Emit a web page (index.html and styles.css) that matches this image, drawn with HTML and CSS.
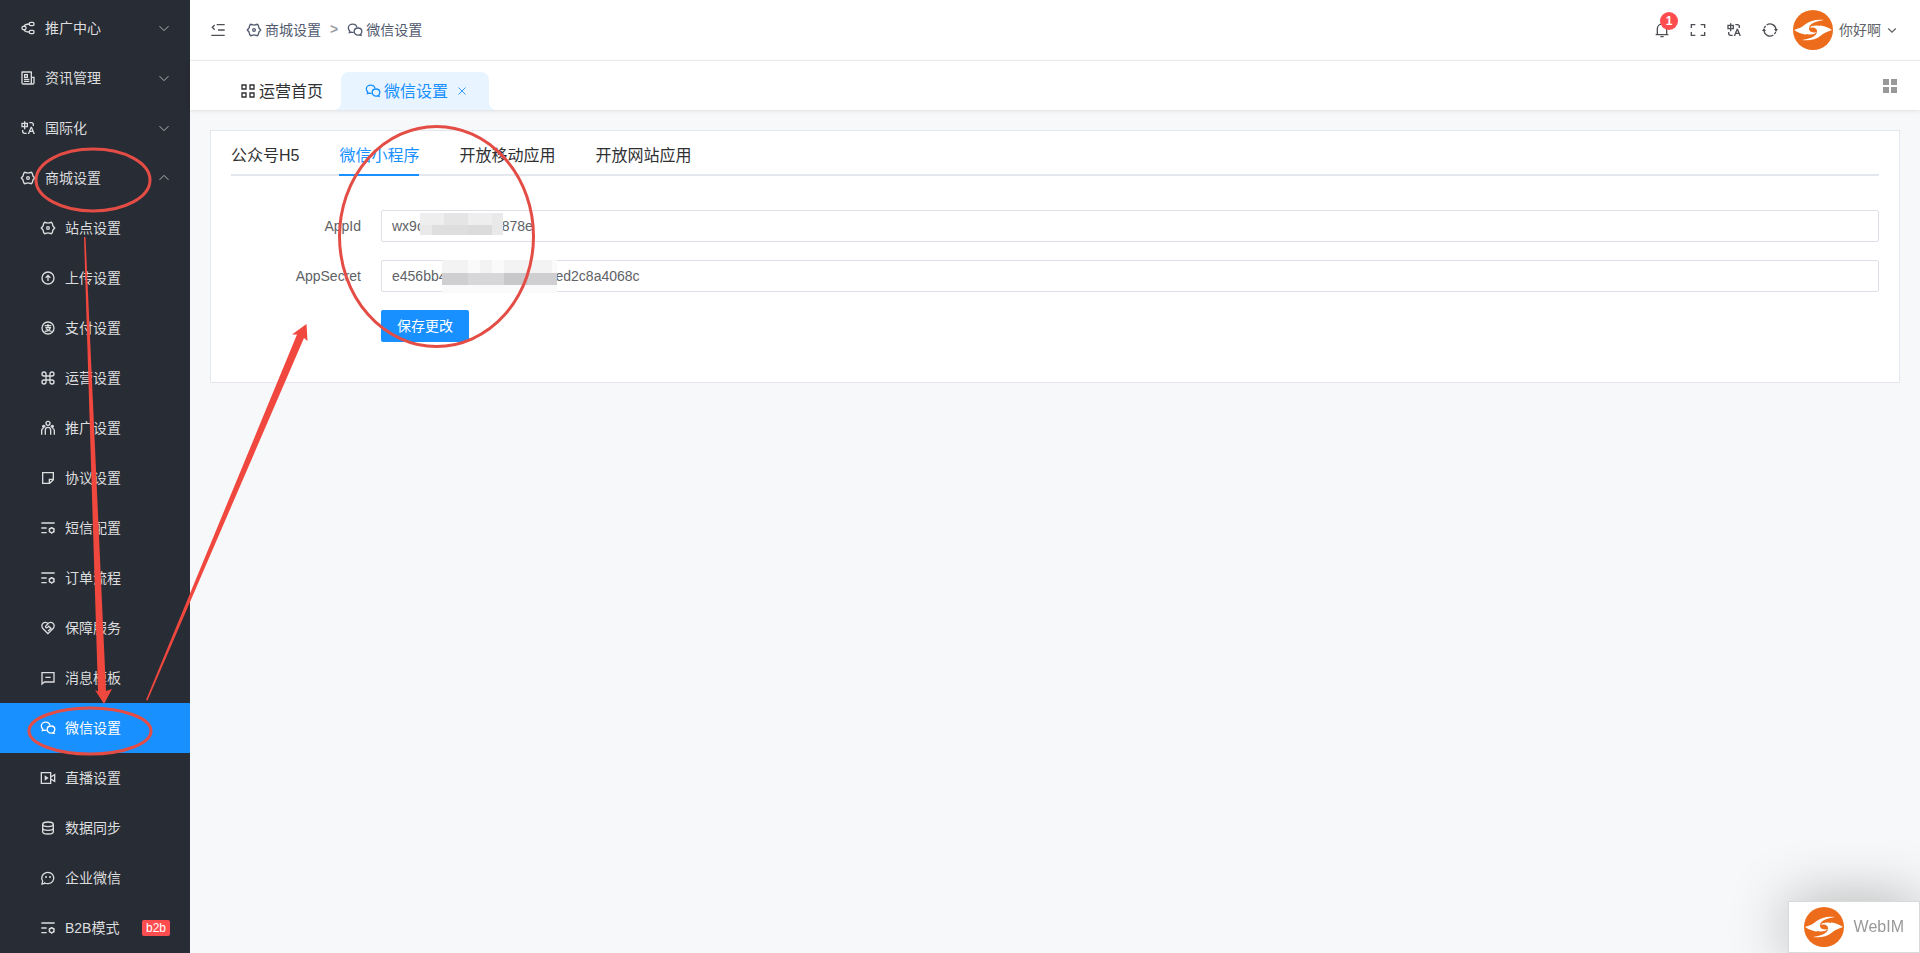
FILE: index.html
```html
<!DOCTYPE html>
<html lang="zh-CN">
<head>
    <meta charset="UTF-8">
    <meta name="viewport" content="width=device-width, initial-scale=1.0">
    <title>微信设置</title>
    <link rel="stylesheet" href="styles.css">
</head>
<body>
    <!-- icons -->
    <svg class="sprite" aria-hidden="true">
        <symbol id="i-share" viewBox="0 0 24 24"><g class="line"><rect x="3" y="9.500" width="6" height="5" rx="2"/><rect x="14" y="3.500" width="7" height="5" rx="2"/><rect x="14" y="15.500" width="7" height="5" rx="2"/><path d="M6 9.500C7 7 9 6 14 6M6 14.500c1 2.500 3 3.500 8 3.500"/></g></symbol>
        <symbol id="i-news" viewBox="0 0 24 24"><path d="M16 20V4H4v15a1 1 0 001 1h11zm3 2H5a3 3 0 01-3-3V3a1 1 0 011-1h14a1 1 0 011 1v7h4v9a3 3 0 01-3 3zm-1-10v7a1 1 0 002 0v-7h-2zM6 6h6v6H6V6zm2 2v2h2V8H8zm-2 5h8v2H6v-2zm0 3h8v2H6v-2z"/></symbol>
        <symbol id="i-lang" viewBox="0 0 24 24"><path d="M5 15v2a2 2 0 001.850 1.995L7 19h3v2H7a4 4 0 01-4-4v-2h2zm13-5l4.400 11h-2.155l-1.201-3h-4.090l-1.199 3h-2.154L16 10h2zm-1 2.885L15.753 16h2.492L17 12.885zM8 2v2h4v7H8v3H6v-3H2V4h4V2h2zm9 1a4 4 0 014 4v2h-2V7a2 2 0 00-2-2h-3V3h3zM6 6H4v3h2V6zm4 0H8v3h2V6z"/></symbol>
        <symbol id="i-gear" viewBox="0 0 24 24"><g class="line"><path d="M2 12l2.500-3c.8-1 .3-2.500 1-3.800L7 3.500l2.500.6c1.600.6 3.400.6 5 0l2.500-.6 1.500 1.700c.7 1.300.2 2.800 1 3.800l2.500 3-2.500 3c-.8 1-.3 2.500-1 3.800L17 20.500l-2.500-.6c-1.600-.6-3.400-.6-5 0l-2.500.6-1.500-1.700c-.7-1.300-.2-2.800-1-3.800z"/><circle cx="12" cy="12" r="2"/></g></symbol>
        <symbol id="i-upload" viewBox="0 0 24 24"><g class="line"><circle cx="12" cy="12" r="9"/><path d="M12 16.500V9M8.500 11.500L12 8l3.500 3.500"/></g></symbol>
        <symbol id="i-pay" viewBox="0 0 24 24"><g class="line"><circle cx="12" cy="12" r="9"/><path d="M7 8.500h10M12 6v5.500M8 11.500h7.500c-1 3-4 5.500-8.500 5.500M9 13c2 2.500 5 4 8.500 4"/></g></symbol>
        <symbol id="i-command" viewBox="0 0 24 24"><path class="line" d="M18 3a3 3 0 00-3 3v12a3 3 0 103-3H6a3 3 0 103 3V6a3 3 0 10-3 3h12a3 3 0 000-6z"/></symbol>
        <symbol id="i-team" viewBox="0 0 24 24"><g class="line"><circle cx="12" cy="5" r="3"/><path d="M8 22v-7a4 4 0 018 0v7M2.500 22v-6a3.500 3.500 0 013-3.500M21.500 22v-6a3.500 3.500 0 00-3-3.500"/></g><circle cx="5.500" cy="9.500" r="2.500"/><circle cx="18.500" cy="9.500" r="2.500"/></symbol>
        <symbol id="i-note" viewBox="0 0 24 24"><path class="line" d="M20 14.500L14.500 20H4V4h16zM20 14h-6v6"/></symbol>
        <symbol id="i-list" viewBox="0 0 24 24"><g class="line"><path d="M2 4.500h20M2 12h8M2 19h8"/><circle cx="17.500" cy="15.500" r="3.500"/><path d="M17.500 10.500V12M17.500 19v1.500M13.200 13l1.200.7M20.600 17.300l1.200.7M13.200 18l1.200-.7M20.600 13.700l1.200-.7"/></g></symbol>
        <symbol id="i-heart" viewBox="0 0 24 24"><path class="line" d="M12 20.500l-8-8.200A5.200 5.200 0 0112 5.500a5.200 5.200 0 018 6.800zM12 5.500L8.300 9.400c-.6 2 1.700 3 3 1.700l1.900-1.700 3.300 3.300L12 16.500"/></symbol>
        <symbol id="i-message" viewBox="0 0 24 24"><path class="line" d="M6.500 18L3 21V4h18v14zM8 11h8"/></symbol>
        <symbol id="i-wechat" viewBox="0 0 24 24"><path class="line" d="M10 15.500c-1 .2-2.200.2-3.300-.3L3.500 16l.6-2.600A6 6 0 012 9c0-3.300 3-5.800 6.500-5.800 3.300 0 5.900 2 6.400 5"/><path class="line" d="M16.500 9c3.200 0 5.700 2.300 5.700 5.200 0 1.400-.6 2.700-1.500 3.600l.4 2.200-2.300-.8c-.7.2-1.500.4-2.300.4-3.200 0-5.700-2.400-5.700-5.400S13.300 9 16.500 9z"/></symbol>
        <symbol id="i-live" viewBox="0 0 24 24"><path class="line" d="M2 4h14v16H2zM16 10.500l6-3.500v10l-6-3.500"/><path d="M7 8v8l6-4z"/></symbol>
        <symbol id="i-data" viewBox="0 0 24 24"><g class="line"><ellipse cx="12" cy="6.500" rx="8" ry="3.500"/><path d="M4 6.500v11C4 19.500 7.500 21 12 21s8-1.500 8-3.500v-11M4 12c0 2 3.500 3.500 8 3.500s8-1.500 8-3.500"/></g></symbol>
        <symbol id="i-chat" viewBox="0 0 24 24"><path class="line" d="M7 20l-4 1 1-4.500A9 8.500 0 1112.500 20.500 10 10 0 017 19.500z"/><circle cx="9" cy="10.500" r="1.500"/><circle cx="15" cy="10.500" r="1.500"/></symbol>
        <symbol id="i-fold" viewBox="0 0 24 24"><path class="line" d="M10 4h12M12 12h10M2 20h20M7 4.500L3.500 8 7 11.500"/></symbol>
        <symbol id="i-grid" viewBox="0 0 24 24"><path class="line" d="M3 3h6v6H3zM15 3h6v6h-6zM3 15h6v6H3zM15 15h6v6h-6z"/></symbol>
        <symbol id="i-bell" viewBox="0 0 24 24"><path class="line" d="M2.500 19h19M5 19v-9a7 7 0 0114 0v9M9.500 22h5"/></symbol>
        <symbol id="i-full" viewBox="0 0 24 24"><path class="line" d="M2 9V4h6M16 4h6v5M22 15v5h-6M8 20H2v-5"/></symbol>
        <symbol id="i-refresh" viewBox="0 0 24 24"><path class="line" d="M7 4.500a9 9 0 0114 7.500M17 19.500A9 9 0 013 12M3.500 9A9 9 0 015.500 6M20.500 15a9 9 0 01-2 3"/><path d="M0 13.500h6L3 9zM18 10.500h6L21 15z"/></symbol>
        <symbol id="i-down" viewBox="0 0 16 16"><path d="M2 5.500l6 6 6-6"/></symbol>
        <symbol id="i-up" viewBox="0 0 16 16"><path d="M2 10.500l6-6 6 6"/></symbol>
        <symbol id="i-close" viewBox="0 0 16 16"><path d="M4 4l8 8M12 4l-8 8"/></symbol>
        <symbol id="i-tiles" viewBox="0 0 14 14"><path d="M0 0h6v6H0zM8 0h6v6H8zM0 8h6v6H0zM8 8h6v6H8z"/></symbol>
        <symbol id="i-logo" viewBox="0 0 40 40">
            <circle cx="20" cy="20" r="20" fill="#ec6c1b"/>
            <path id="wing" fill="#fff" d="M1 20C6 18.500 9 17 12 14.500 17 10 25 9 31 10 24 11 17 13 16 18 15.500 22 20 23.500 25 21.500 20 27 8 25 1 20z"/>
            <use href="#wing" transform="rotate(180 20 20)"/>
            <path fill="none" stroke="#ec6c1b" d="M27 15.500c-6-2-11 .5-10 2.500 1 1.500 5 2 6 4 1 2-4 4.500-10 2.500"/>
        </symbol>
    </svg>

    <div class="layout">
        <nav class="sidebar">
            <a class="menu-item" href="#"><svg class="icon"><use href="#i-share"/></svg><span>推广中心</span><svg class="arrow"><use href="#i-down"/></svg></a>
            <a class="menu-item" href="#"><svg class="icon"><use href="#i-news"/></svg><span>资讯管理</span><svg class="arrow"><use href="#i-down"/></svg></a>
            <a class="menu-item" href="#"><svg class="icon"><use href="#i-lang"/></svg><span>国际化</span><svg class="arrow"><use href="#i-down"/></svg></a>
            <a class="menu-item" href="#"><svg class="icon"><use href="#i-gear"/></svg><span>商城设置</span><svg class="arrow"><use href="#i-up"/></svg></a>
            <a class="menu-item sub" href="#"><svg class="icon"><use href="#i-gear"/></svg><span>站点设置</span></a>
            <a class="menu-item sub" href="#"><svg class="icon"><use href="#i-upload"/></svg><span>上传设置</span></a>
            <a class="menu-item sub" href="#"><svg class="icon"><use href="#i-pay"/></svg><span>支付设置</span></a>
            <a class="menu-item sub" href="#"><svg class="icon"><use href="#i-command"/></svg><span>运营设置</span></a>
            <a class="menu-item sub" href="#"><svg class="icon"><use href="#i-team"/></svg><span>推广设置</span></a>
            <a class="menu-item sub" href="#"><svg class="icon"><use href="#i-note"/></svg><span>协议设置</span></a>
            <a class="menu-item sub" href="#"><svg class="icon"><use href="#i-list"/></svg><span>短信配置</span></a>
            <a class="menu-item sub" href="#"><svg class="icon"><use href="#i-list"/></svg><span>订单流程</span></a>
            <a class="menu-item sub" href="#"><svg class="icon"><use href="#i-heart"/></svg><span>保障服务</span></a>
            <a class="menu-item sub" href="#"><svg class="icon"><use href="#i-message"/></svg><span>消息模板</span></a>
            <a class="menu-item sub active" href="#"><svg class="icon"><use href="#i-wechat"/></svg><span>微信设置</span></a>
            <a class="menu-item sub" href="#"><svg class="icon"><use href="#i-live"/></svg><span>直播设置</span></a>
            <a class="menu-item sub" href="#"><svg class="icon"><use href="#i-data"/></svg><span>数据同步</span></a>
            <a class="menu-item sub" href="#"><svg class="icon"><use href="#i-chat"/></svg><span>企业微信</span></a>
            <a class="menu-item sub" href="#"><svg class="icon"><use href="#i-list"/></svg><span>B2B模式</span><em class="tag">b2b</em></a>
        </nav>

        <div class="main">
            <header class="header">
                <button class="icon-btn fold" aria-label="折叠菜单"><svg class="icon"><use href="#i-fold"/></svg></button>
                <div class="breadcrumb">
                    <a href="#"><svg class="icon"><use href="#i-gear"/></svg><span>商城设置</span></a>
                    <span class="sep">&gt;</span>
                    <a href="#"><svg class="icon"><use href="#i-wechat"/></svg><span>微信设置</span></a>
                </div>
                <div class="tools">
                    <button class="icon-btn bell" aria-label="通知"><svg class="icon"><use href="#i-bell"/></svg><span class="count">1</span></button>
                    <button class="icon-btn" aria-label="全屏"><svg class="icon"><use href="#i-full"/></svg></button>
                    <button class="icon-btn" aria-label="语言"><svg class="icon"><use href="#i-lang"/></svg></button>
                    <button class="icon-btn" aria-label="刷新"><svg class="icon"><use href="#i-refresh"/></svg></button>
                </div>
                <button class="user"><svg class="logo"><use href="#i-logo"/></svg><span>你好啊</span><svg class="arrow"><use href="#i-down"/></svg></button>
            </header>

            <div class="page-tabs">
                <a class="page-tab" href="#"><svg class="icon"><use href="#i-grid"/></svg><span>运营首页</span></a>
                <a class="page-tab current" href="#"><svg class="icon"><use href="#i-wechat"/></svg><span>微信设置</span><svg class="close"><use href="#i-close"/></svg></a>
                <button class="icon-btn more" aria-label="更多"><svg class="tiles"><use href="#i-tiles"/></svg></button>
            </div>

            <main class="content">
                <section class="card">
                    <div class="tabs">
                        <button class="tab">公众号H5</button>
                        <button class="tab on">微信小程序</button>
                        <button class="tab">开放移动应用</button>
                        <button class="tab">开放网站应用</button>
                    </div>
                    <form class="form">
                        <div class="form-row">
                            <label for="appid">AppId</label>
                            <div class="field">
                                <input type="text" id="appid" value="wx9c0000000000878e">
                                <svg class="mask mask-id" viewBox="0 0 83 22" aria-hidden="true">
                                    <rect width="83" height="22" fill="#e9e9ea"/>
                                    <path fill="#eeeeee" d="M0 0h24v12H0zM48 0h24v12H48z"/>
                                    <path fill="#e5e5e6" d="M24 0h24v12H24z"/>
                                    <path fill="#dededf" d="M12 12h36v10H12z"/>
                                    <path fill="#dbdbdc" d="M48 12h24v10H48z"/>
                                </svg>
                            </div>
                        </div>
                        <div class="form-row">
                            <label for="secret">AppSecret</label>
                            <div class="field">
                                <input type="text" id="secret" value="e456bb400000000000000ed2c8a4068c">
                                <svg class="mask mask-secret" viewBox="0 0 115 33" aria-hidden="true">
                                    <rect width="115" height="33" fill="#fafafa"/>
                                    <path fill="#f3f3f4" d="M0 0h26v13H0zM38 0h12v13H38zM62 0h48v13H62z"/>
                                    <path fill="#cfcfd1" d="M0 13h115v12H0z"/>
                                    <path fill="#d7d7d9" d="M26 13h36v12H26z"/>
                                    <path fill="#c8c8ca" d="M62 13h24v12H62z"/>
                                </svg>
                            </div>
                        </div>
                        <div class="form-row">
                            <button type="button" class="save">保存更改</button>
                        </div>
                    </form>
                </section>
            </main>
        </div>
    </div>

    <button class="webim"><svg class="logo"><use href="#i-logo"/></svg><span>WebIM</span></button>

    <!-- guide marks -->
    <svg class="marks" width="560" height="780" viewBox="0 0 560 780" aria-hidden="true">
        <ellipse cx="93" cy="180" rx="57" ry="31"/>
        <ellipse cx="90" cy="731" rx="61" ry="23"/>
        <ellipse cx="436.500" cy="236.500" rx="97" ry="110"/>
        <path d="M84 237h1.500L106 691l6-2-8 15-9-14 3 1.500z"/>
        <path d="M146 700l151-365.500-5 0 14.500-10.500 1 17-3.500-3L147.500 700.500z"/>
    </svg>
</body>
</html>
```

FILE: styles.css
```css
* {
    box-sizing: border-box;
}

body {
    margin: 0;
    font-family: "Liberation Sans", "Noto Sans CJK SC", sans-serif;
    font-size: 14px;
    color: #606266;
    background: #f6f8f9;
}

a {
    color: inherit;
    text-decoration: none;
}

button {
    padding: 0;
    border: none;
    background: none;
    font: inherit;
    color: inherit;
    cursor: pointer;
}

.sprite {
    position: absolute;
    width: 0;
    height: 0;
}

.icon {
    width: 16px;
    height: 16px;
    flex: none;
    fill: currentColor;
}

.line {
    fill: none;
    stroke: currentColor;
    stroke-width: 2;
}

.arrow {
    width: 12px;
    height: 12px;
    flex: none;
    fill: none;
    stroke: currentColor;
}

.logo {
    width: 40px;
    height: 40px;
    flex: none;
}

.layout {
    display: flex;
    min-height: 100vh;
}

/* sidebar */
.sidebar {
    width: 190px;
    flex: none;
    padding-top: 3px;
    background: #282c34;
}

.menu-item {
    display: flex;
    align-items: center;
    gap: 9px;
    height: 50px;
    padding: 0 20px;
    color: #dcdddf;
}

.menu-item.sub {
    padding-left: 40px;
}

.menu-item.active {
    color: #fff;
    background: #1890ff;
}

.menu-item span,
.breadcrumb span,
.user span,
.page-tab span {
    padding-bottom: 2px;
}

.menu-item .arrow {
    margin-left: auto;
}

.tag {
    margin-left: auto;
    padding: 0 4px;
    border-radius: 2px;
    font-size: 12px;
    font-style: normal;
    line-height: 16px;
    color: #fff;
    background: #ff4d4f;
}

/* top bar */
.main {
    flex: 1;
    min-width: 0;
}

.header {
    display: flex;
    align-items: center;
    height: 61px;
    padding: 0 20px;
    border-bottom: 1px solid #f1f1f3;
    background: #fff;
}

.icon-btn {
    display: flex;
    color: #4d4f55;
}

.breadcrumb {
    display: flex;
    align-items: center;
    gap: 9px;
    margin-left: 20px;
    color: #515a6e;
}

.breadcrumb a {
    display: flex;
    align-items: center;
    gap: 3px;
}

.sep {
    font-weight: bold;
    color: #9a9da3;
}

.tools {
    display: flex;
    gap: 20px;
    margin-left: auto;
}

.bell {
    position: relative;
}

.count {
    position: absolute;
    top: -10px;
    left: 6px;
    width: 18px;
    height: 18px;
    border-radius: 9px;
    font-size: 12px;
    font-weight: bold;
    line-height: 18px;
    text-align: center;
    color: #fff;
    background: #ff4d4f;
}

.user {
    display: flex;
    align-items: center;
    gap: 6px;
    margin-left: 15px;
    padding-right: 3px;
}

.user .arrow {
    width: 10px;
    height: 10px;
    stroke-width: 2;
}

/* opened pages */
.page-tabs {
    position: relative;
    display: flex;
    align-items: flex-end;
    height: 49px;
    padding: 0 23px 0 26px;
    background: #fff;
    box-shadow: 0 1px 4px rgba(0, 21, 41, 0.1);
}

.page-tab {
    position: relative;
    display: flex;
    align-items: center;
    gap: 3px;
    height: 38px;
    padding: 0 24px;
    font-size: 16px;
    color: #303133;
}

.page-tab:first-child {
    padding-right: 18px;
}

.page-tab.current {
    padding-right: 20px;
    border-radius: 8px 8px 0 0;
    color: #1890ff;
    background: #e8f4ff;
}

.page-tab.current::before,
.page-tab.current::after {
    content: "";
    position: absolute;
    bottom: 0;
    width: 8px;
    height: 8px;
}

.page-tab.current::before {
    left: -8px;
    background: radial-gradient(circle at 0 0, transparent 8px, #e8f4ff 8px);
}

.page-tab.current::after {
    right: -8px;
    background: radial-gradient(circle at 100% 0, transparent 8px, #e8f4ff 8px);
}

.close {
    width: 14px;
    height: 14px;
    margin-left: 4px;
    stroke: currentColor;
}

.more {
    align-self: center;
    margin-left: auto;
    color: #999;
}

.tiles {
    width: 14px;
    height: 14px;
    fill: currentColor;
}

/* settings card */
.content {
    padding: 20px;
}

.card {
    padding: 5px 20px 40px;
    border: 1px solid #e4e7ed;
    background: #fff;
}

.tabs {
    display: flex;
    gap: 40px;
    height: 40px;
    box-shadow: inset 0 -2px #e4e7ed;
}

.tab {
    padding-bottom: 2px;
    border-bottom: 2px solid transparent;
    font-size: 16px;
    color: #303133;
}

.tab.on {
    border-bottom-color: #1890ff;
    color: #1890ff;
}

.form {
    display: flex;
    flex-direction: column;
    gap: 18px;
    padding-top: 34px;
}

.form-row {
    display: flex;
    align-items: center;
    padding-left: 150px;
}

.form-row label {
    width: 150px;
    margin-left: -150px;
    padding-right: 20px;
    text-align: right;
}

.field {
    position: relative;
    flex: 1;
}

.field input {
    display: block;
    width: 100%;
    height: 32px;
    padding: 0 10px;
    border: 1px solid #dcdfe6;
    border-radius: 2px;
    font: inherit;
    color: #606266;
    background: #fff;
}

.mask {
    position: absolute;
}

.mask-id {
    top: 3px;
    left: 39px;
    width: 83px;
    height: 22px;
}

.mask-secret {
    top: 0;
    left: 61px;
    width: 115px;
    height: 33px;
}

.save {
    height: 32px;
    padding: 0 16px 2px;
    border-radius: 2px;
    color: #fff;
    background: #1890ff;
}

/* floating chat */
.webim {
    position: fixed;
    right: 0;
    bottom: 0;
    display: flex;
    align-items: center;
    gap: 10px;
    height: 52px;
    padding: 0 15px;
    border: 1px solid #d9d9d9;
    font-size: 16px;
    color: #999;
    background: #fff;
    box-shadow: 0 0 60px rgba(0, 0, 0, 0.3);
}

.marks {
    position: absolute;
    top: 0;
    left: 0;
    fill: #f0483e;
    pointer-events: none;
}

.marks ellipse {
    fill: none;
    stroke: #e34d45;
    stroke-width: 3;
}
```
